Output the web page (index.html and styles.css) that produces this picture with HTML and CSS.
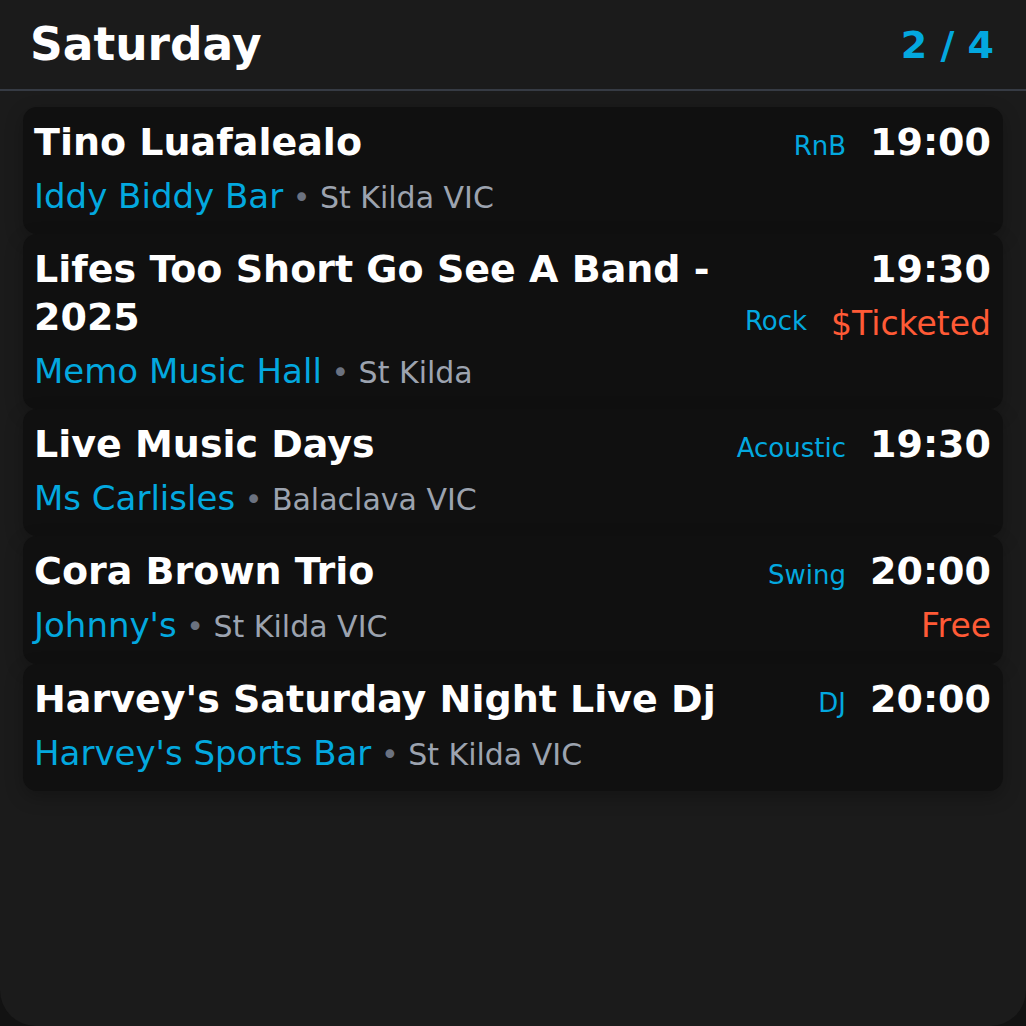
FILE: index.html
```html
<!DOCTYPE html>
<html lang="en">
<head>
<meta charset="utf-8">
<title>Saturday</title>
<link rel="stylesheet" href="styles.css">
</head>
<body>
<div class="screen">
  <header class="header">
    <h1 class="day">Saturday</h1>
    <div class="pager">2 / 4</div>
  </header>
  <main class="list">
    <div class="card">
      <div class="main">
        <div class="title-row">
          <div class="title">Tino Luafalealo</div>
          <div class="genre">RnB</div>
        </div>
        <div class="venue-row"><span class="venue">Iddy Biddy Bar</span><span class="loc"> <span class="dot">•</span> St Kilda VIC</span></div>
      </div>
      <div class="side">
        <div class="time">19:00</div>
      </div>
    </div>
    <div class="card">
      <div class="main">
        <div class="title-row">
          <div class="title">Lifes Too Short Go See A Band - 2025</div>
          <div class="genre">Rock</div>
        </div>
        <div class="venue-row"><span class="venue">Memo Music Hall</span><span class="loc"> <span class="dot">•</span> St Kilda</span></div>
      </div>
      <div class="side">
        <div class="time">19:30</div>
        <div class="price">$Ticketed</div>
      </div>
    </div>
    <div class="card">
      <div class="main">
        <div class="title-row">
          <div class="title">Live Music Days</div>
          <div class="genre">Acoustic</div>
        </div>
        <div class="venue-row"><span class="venue">Ms Carlisles</span><span class="loc"> <span class="dot">•</span> Balaclava VIC</span></div>
      </div>
      <div class="side">
        <div class="time">19:30</div>
      </div>
    </div>
    <div class="card">
      <div class="main">
        <div class="title-row">
          <div class="title">Cora Brown Trio</div>
          <div class="genre">Swing</div>
        </div>
        <div class="venue-row"><span class="venue">Johnny's</span><span class="loc"> <span class="dot">•</span> St Kilda VIC</span></div>
      </div>
      <div class="side">
        <div class="time">20:00</div>
        <div class="price">Free</div>
      </div>
    </div>
    <div class="card">
      <div class="main">
        <div class="title-row">
          <div class="title">Harvey's Saturday Night Live Dj</div>
          <div class="genre">DJ</div>
        </div>
        <div class="venue-row"><span class="venue">Harvey's Sports Bar</span><span class="loc"> <span class="dot">•</span> St Kilda VIC</span></div>
      </div>
      <div class="side">
        <div class="time">20:00</div>
      </div>
    </div>
  </main>
</div>
</body>
</html>
```

FILE: styles.css
```css
* { box-sizing: border-box; }
html, body {
  margin: 0;
  padding: 0;
  background: #121212;
}
body {
  font-family: "DejaVu Sans", "Liberation Sans", sans-serif;
  color: #ffffff;
}
.screen {
  width: 1026px;
  height: 1026px;
  background: #1b1b1b;
  border-radius: 0 0 36px 36px;
  overflow: hidden;
}
.header {
  height: 91px;
  display: flex;
  align-items: center;
  justify-content: space-between;
  padding: 0 32px 0 30px;
  border-bottom: 2px solid #363b44;
}
.day {
  margin: 0;
  font-size: 45.5px;
  font-weight: 700;
  line-height: 1;
  color: #ffffff;
}
.pager {
  font-size: 38px;
  font-weight: 700;
  line-height: 1;
  color: #03a8df;
}
.list {
  padding: 16px 23px 0;
  display: flex;
  flex-direction: column;
}
.card {
  display: flex;
  gap: 24px;
  background: #101010;
  border-radius: 14px;
  padding: 11px 12px 15px 11px;
  box-shadow: 0 6px 18px rgba(0, 0, 0, 0.25);
}
.main {
  flex: 1 1 auto;
  min-width: 0;
}
.title-row {
  display: flex;
  align-items: last baseline;
  gap: 16px;
}
.title {
  flex: 0 1 auto;
  font-size: 38px;
  font-weight: 700;
  line-height: 48px;
  color: #ffffff;
}
.genre {
  margin-left: auto;
  flex: 0 0 auto;
  font-size: 26px;
  line-height: 26px;
  color: #03a8df;
}
.venue-row {
  margin-top: 7px;
  font-size: 34px;
  line-height: 46px;
  white-space: nowrap;
}
.venue {
  color: #03a8df;
}
.loc {
  font-size: 30px;
  line-height: 30px;
  color: #9ca3af;
}
.dot {
  color: #6b7280;
}
.side {
  flex: 0 0 auto;
  display: flex;
  flex-direction: column;
  align-items: flex-end;
}
.time {
  font-size: 38px;
  font-weight: 700;
  line-height: 48px;
  color: #ffffff;
}
.price {
  margin-top: 8px;
  font-size: 33px;
  line-height: 46px;
  color: #ff5a36;
}
```
